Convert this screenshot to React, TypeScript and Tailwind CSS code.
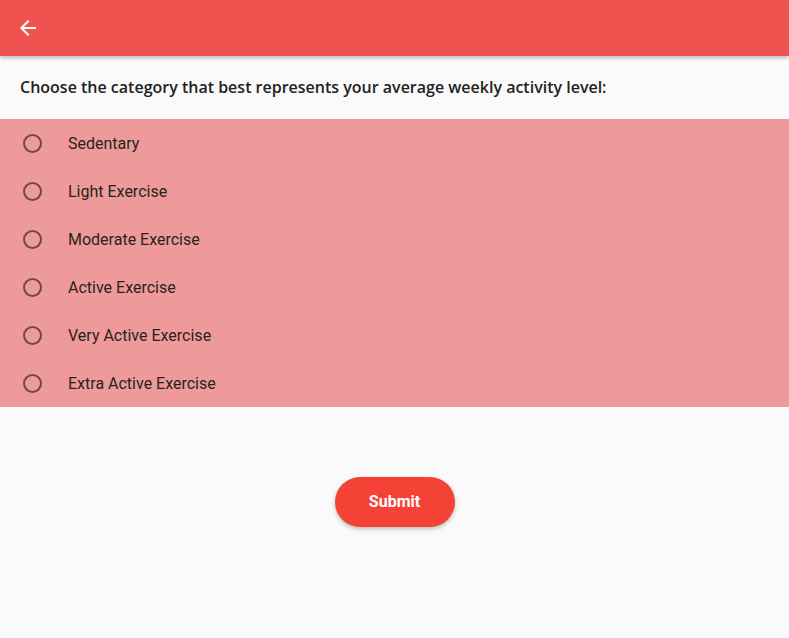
import { useState } from 'react';

const levels = [
  'Sedentary',
  'Light Exercise',
  'Moderate Exercise',
  'Active Exercise',
  'Very Active Exercise',
  'Extra Active Exercise',
];

export default function App() {
  const [selected, setSelected] = useState<string | null>(null);

  return (
    <div className="flex flex-col min-h-[638px] w-full bg-[#fafafa] font-['Roboto',sans-serif]">
      {/* App bar */}
      <div className="h-14 bg-[#ef5350] flex items-center px-4 shadow-[0_2px_4px_rgba(0,0,0,0.25)] relative z-10">
        <button className="w-6 h-6 flex items-center justify-center text-white">
          <svg width="24" height="24" viewBox="0 0 24 24" fill="currentColor">
            <path d="M20 11H7.83l5.59-5.59L12 4l-8 8 8 8 1.41-1.41L7.83 13H20v-2z" />
          </svg>
        </button>
      </div>

      <p className="px-5 pt-[21px] pb-[21px] text-[16px] leading-[21px] font-semibold text-[#222] font-['Open_Sans',sans-serif]">
        Choose the category that best represents your average weekly activity level:
      </p>

      <div className="bg-[#ef9a9a] flex flex-col">
        {levels.map((level) => (
          <label key={level} className="h-12 flex items-center cursor-pointer" onClick={() => setSelected(level)}>
            <span className="w-16 flex items-center justify-center">
              <span className="w-[19px] h-[19px] rounded-full border-2 border-[#6d4a4a] flex items-center justify-center">
                {selected === level && <span className="w-[9px] h-[9px] rounded-full bg-[#6d4a4a]" />}
              </span>
            </span>
            <span className="ml-1 pt-0.5 text-base text-[#2a1f1f]">{level}</span>
          </label>
        ))}
      </div>

      <div className="flex justify-center pt-[70px]">
        <button className="w-[120px] h-[50px] rounded-full bg-[#f44336] text-white font-bold text-base shadow-[0_2px_4px_rgba(0,0,0,0.25)]">
          Submit
        </button>
      </div>
    </div>
  );
}
